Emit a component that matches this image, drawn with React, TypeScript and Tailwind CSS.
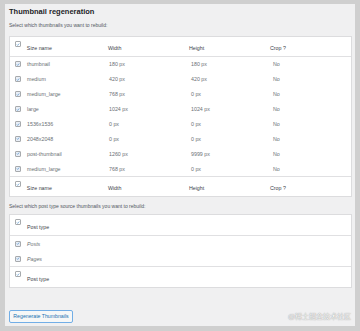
import React from 'react'

const sizes = [
  { name: 'thumbnail', width: '180 px', height: '180 px' },
  { name: 'medium', width: '420 px', height: '420 px' },
  { name: 'medium_large', width: '768 px', height: '0 px' },
  { name: 'large', width: '1024 px', height: '1024 px' },
  { name: '1536x1536', width: '0 px', height: '0 px' },
  { name: '2048x2048', width: '0 px', height: '0 px' },
  { name: 'post-thumbnail', width: '1260 px', height: '9999 px' },
  { name: 'medium_large', width: '768 px', height: '0 px' },
]

function Check({ filled = true }: { filled?: boolean }) {
  return (
    <span
      className={`flex h-[6px] w-[6px] items-center justify-center rounded-[1px] border border-[#a7aaad] ${filled ? 'bg-[#e9eef6]' : 'bg-white'}`}
    >
      <svg viewBox="0 0 10 10" className="h-[5px] w-[5px]">
        <path d="M2 5.2l2 2 4-4.6" fill="none" stroke="#3582c4" strokeWidth="1.5" />
      </svg>
    </span>
  )
}

function HeadRow({ cols, top }: { cols: string[]; top?: boolean }) {
  return (
    <div className={`flex h-[20px] text-[#3c434a] ${top ? 'border-b' : 'border-t'} border-[#e0e0e2]`}>
      <div className="w-[17px] pl-[5px] pt-[4px]">
        <Check filled={false} />
      </div>
      {cols.map((c, i) => (
        <div key={i} className="w-[82px] pt-[8px]">
          {c}
        </div>
      ))}
    </div>
  )
}

export default function App() {
  return (
    <div className="h-[331px] w-[360px] bg-[#cfcfcf] pl-[5px] pt-[4px] font-['Liberation_Sans',Arial,sans-serif]">
      <div className="flex h-[322px] w-[350px] flex-col bg-[#f0f0f1] pl-[4px] pr-[3px]">
        <h2 className="mt-[3px] text-[7.5px] font-semibold leading-[9px] text-[#1d2327]">Thumbnail regeneration</h2>
        <p className="mt-[6px] text-[5px] leading-[6px] text-[#50575e]">Select which thumbnails you want to rebuild:</p>

        {/* Sizes table */}
        <div className="mt-[8px] border border-[#dcdcde] bg-white text-[5.3px] leading-[6px]">
          <HeadRow top cols={['Size name', 'Width', 'Height', 'Crop ?']} />
          {sizes.map((s, i) => (
            <div key={i} className="flex h-[14.9px] items-center text-[#6b7075]">
              <div className="w-[17px] pl-[5px]">
                <Check />
              </div>
              <div className="w-[82px]">{s.name}</div>
              <div className="w-[82px]">{s.width}</div>
              <div className="w-[82px]">{s.height}</div>
              <div>No</div>
            </div>
          ))}
          <HeadRow cols={['Size name', 'Width', 'Height', 'Crop ?']} />
        </div>

        <p className="mt-[6px] text-[5px] leading-[6px] text-[#50575e]">Select which post type source thumbnails you want to rebuild:</p>

        {/* Post types table */}
        <div className="mt-[5px] border border-[#dcdcde] bg-white text-[5.3px] leading-[6px]">
          <div className="flex h-[21px] border-b border-[#e0e0e2] text-[#3c434a]">
            <div className="w-[17px] pl-[5px] pt-[4px]">
              <Check filled={false} />
            </div>
            <div className="pt-[9px]">Post type</div>
          </div>
          {['Posts', 'Pages'].map(p => (
            <div key={p} className="flex h-[15px] items-center italic text-[#6b7075]">
              <div className="w-[17px] pl-[5px]">
                <Check />
              </div>
              <div>{p}</div>
            </div>
          ))}
          <div className="flex h-[21px] border-t border-[#e0e0e2] text-[#3c434a]">
            <div className="w-[17px] pl-[5px] pt-[4px]">
              <Check filled={false} />
            </div>
            <div className="pt-[9px]">Post type</div>
          </div>
        </div>

        <div className="mt-[22px] flex items-center justify-between">
          <button className="h-[13px] w-[64px] rounded-[2px] border border-[#72aee6] bg-[#f6f7f7] text-[5.2px] leading-[11px] text-[#2271b1]">
            Regenerate Thumbnails
          </button>
          <span className="mr-[1px] text-[7px] leading-[9px] text-[#f4f4f4] [text-shadow:0_0_1px_#777] font-['Liberation_Sans','Noto_Sans_CJK_SC',sans-serif]">
            @稀土掘金技术社区
          </span>
        </div>
      </div>
    </div>
  )
}
